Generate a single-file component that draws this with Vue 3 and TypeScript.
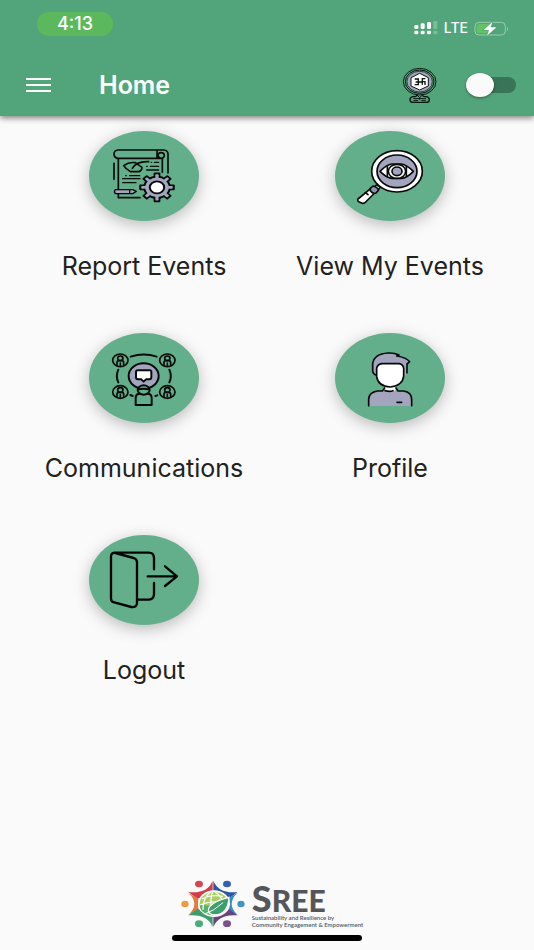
<script setup lang="ts">
import { ref } from 'vue'

type TileId = 'report' | 'view' | 'communications' | 'profile' | 'logout'

interface Tile {
  id: TileId
  label: string
}

const tiles: Tile[] = [
  { id: 'report', label: 'Report Events' },
  { id: 'view', label: 'View My Events' },
  { id: 'communications', label: 'Communications' },
  { id: 'profile', label: 'Profile' },
  { id: 'logout', label: 'Logout' },
]

const members = [
  { x: 121, y: 115 },
  { x: 262, y: 115 },
  { x: 121, y: 210 },
  { x: 262, y: 210 },
]

const teeth = [0, 45, 90, 135, 180, 225, 270, 315]

const enabled = ref(false)
</script>

<template>
  <div class="screen">
    <header class="top">
      <div class="status">
        <span class="clock">4:13</span>
        <div class="signals">
          <svg class="bars" viewBox="101 65 72 42" aria-hidden="true">
            <g fill="#fff">
              <rect x="102" y="94" width="12" height="11" rx="4" />
              <rect x="121" y="94" width="12" height="11" rx="4" />
              <rect x="140" y="94" width="12" height="11" rx="4" />
              <rect x="102" y="77" width="12" height="12" rx="4" />
              <rect x="121" y="72" width="12" height="17" rx="4" />
              <rect x="140" y="68" width="12" height="21" rx="4" />
            </g>
            <g fill="#fff" opacity=".25">
              <rect x="159" y="94" width="12" height="11" rx="3" />
              <rect x="159" y="65" width="12" height="24" rx="3" />
            </g>
          </svg>
          <span class="network">LTE</span>
          <svg class="battery" viewBox="282 61 108 45" aria-hidden="true">
            <rect x="285" y="65" width="91" height="38" rx="12" fill="none" stroke="#9accb2" stroke-width="3" />
            <path d="M381 78q6 6 0 13z" fill="#9accb2" />
            <path d="M298 70h29v28h-29q-8 0-8-8V78q0-8 8-8z" fill="#62c462" />
            <path d="M337 64 311 88h16l-6 17 28-25h-17z" fill="#fff" stroke="#52a57a" stroke-width="4" paint-order="stroke" />
          </svg>
        </div>
      </div>
      <div class="appbar">
        <button class="menu" type="button" aria-label="Open menu">
          <span></span><span></span><span></span>
        </button>
        <h1>Home</h1>
        <svg class="badge" viewBox="67 198 108 111" aria-hidden="true">
          <g fill="none" stroke="#0a1510" stroke-width="3">
            <ellipse cx="120" cy="242" rx="49" ry="40" />
            <ellipse cx="120" cy="242" rx="43" ry="35" />
            <ellipse cx="120" cy="242" rx="38" ry="31" fill="#a2a5bd" stroke-width="2" />
            <path d="m120 217 26 13v25l-26 12-26-12v-25z" fill="#fff" />
            <path d="M105 234h11v17h-11m3-8h19m10-10h-9v18m0-9h8v10" stroke-width="4" />
            <path d="M110 281q2 6-6 6h-4q-9 2-9 9 0 8 9 8h40q9 0 9-8 0-7-9-9h-5q-7 0-5-6" stroke-width="4" />
            <path d="m112 282 8 8 8-8M101 293h38M101 299h14m10 0h14M120 290v6" />
          </g>
        </svg>
        <label class="switch">
          <input v-model="enabled" type="checkbox" aria-label="Toggle" />
          <span class="track"></span>
          <span class="knob"></span>
        </label>
      </div>
    </header>

    <main class="tiles">
      <button v-for="tile in tiles" :key="tile.id" class="tile" type="button">
        <span class="disc">
          <svg v-if="tile.id === 'report'" viewBox="27 33 330 270" aria-hidden="true">
            <g fill="none" stroke="#060b09" stroke-width="5" stroke-linecap="round" stroke-linejoin="round">
              <path d="M239 115H112q-10-2-10-12 0-12 12-13h137q13 1 13 13v56M231 90v24M244 115q9-1 9-9t-10-8-8 10q2 7 9 7M247 116v41M115 116v92M115 222v11h65" />
              <path d="M102 130v48" />
              <path d="M131 137q16-12 35-9l20 14q-1 12-12 13h-22q-15-8-21-18zM157 145q13-22 49-20" />
              <path d="M214 127h1m8 0h13M200 139h2m9 0h25M200 150h36M128 176h52M137 167h2m10 0h30M128 188h40" stroke-width="4" />
              <path d="M106 209h52l11 5-11 7h-52q-5-6 0-12z" fill="#a2a5bd" stroke-width="4" />
              <path d="M149 209v11" stroke-width="4" />
            </g>
            <g transform="translate(231 202) scale(1.2 1)">
              <g fill="#a2a5bd" stroke="#060b09" stroke-width="5" stroke-linejoin="round">
                <rect v-for="angle in teeth" :key="angle" x="-6" y="-42" width="12" height="20" :transform="`rotate(${angle})`" />
                <circle r="32" />
              </g>
              <g fill="#a2a5bd">
                <rect v-for="angle in teeth" :key="angle" x="-4" y="-37" width="8" height="15" :transform="`rotate(${angle})`" />
              </g>
              <circle r="18" fill="#fff" stroke="#060b09" stroke-width="5" />
            </g>
          </svg>

          <svg v-else-if="tile.id === 'view'" viewBox="30 33 330 270" aria-hidden="true">
            <g stroke="#060b09" stroke-width="5" stroke-linecap="round" stroke-linejoin="round">
              <path d="m154 195-16 16 11 8 18-18z" fill="#fff" />
              <path d="m134 208-35 29q-3 5 4 9l9 4q6 1 10-4l30-30z" fill="#fff" />
              <path d="m144 198-9 8q0 9 10 14l8-1 8-9q-4-9-17-12z" fill="#8f93b0" />
              <ellipse cx="216" cy="154" rx="76" ry="62" fill="#fff" />
              <ellipse cx="216" cy="154" rx="60" ry="49" fill="#a2a5bd" />
              <path d="M165 154q20-20 35-22h29q17 3 36 22-19 20-36 21h-29q-16-2-35-21z" fill="#fff" />
              <path d="M187 139v30m57-30v30" fill="none" />
              <ellipse cx="216" cy="154" rx="26" ry="21" fill="#fff" />
              <ellipse cx="216" cy="154" rx="15" ry="13" fill="#a2a5bd" />
              <path d="m121 218 8 6" />
            </g>
          </svg>

          <svg v-else-if="tile.id === 'communications'" viewBox="27 33 330 270" aria-hidden="true">
            <g fill="none" stroke="#060b09" stroke-width="6" stroke-linecap="round" stroke-linejoin="round">
              <path d="M152 104q40-13 78 0M115 143q-9 20 0 38M268 143q9 20 0 38M151 219l7 3m68 0 6-2" />
              <ellipse cx="191" cy="162" rx="45" ry="38" fill="#a2a5bd" />
              <path d="M173 145h36q5 0 5 5v16q0 6-6 6h-10l-7 7-7-7h-10q-6 0-6-6v-16q0-5 5-5z" fill="#fff" />
              <g v-for="member in members" :key="`${member.x}-${member.y}`" :transform="`translate(${member.x} ${member.y})`" stroke-width="5">
                <ellipse rx="23" ry="19" />
                <ellipse cy="-6" rx="8" ry="7" />
                <path d="M-10 15V7q0-6 6-6h8q6 0 6 6v8M0 8v7" />
              </g>
              <path d="M167 249v-21q0-13 13-13h22q13 0 13 13v21z" fill="#64af8b" />
              <ellipse cx="191" cy="204" rx="18" ry="14" fill="#64af8b" />
              <path d="M175 202q16-4 32 0" />
            </g>
          </svg>

          <svg v-else-if="tile.id === 'profile'" viewBox="30 33 330 270" aria-hidden="true">
            <path d="M131 252v-20q0-21 27-25h18l6-12h28l6 12h20q24 5 24 25v20z" fill="#a2a5bd" />
            <path d="M180 190h32v14q-17 11-35 1z" fill="#fff" />
            <g stroke="#060b09" stroke-width="5" stroke-linecap="round" stroke-linejoin="round">
              <path d="M131 251v-19q0-21 27-25h14l7-9M260 251v-19q0-21-24-25h-17l-6-9M180 206q15 4 24 0M216 241h14" fill="none" />
              <path d="M154 159q-12-2-11-17v-17q4-29 46-32 24-1 34 8 23 4 33 17l-8 7v29q0 4-9 8z" fill="#a2a5bd" stroke="none" />
              <path d="M152 159q-10-4-9-17v-17q4-29 46-32 20-1 33 6l-7 3q29 4 39 17l-8 7v27" fill="none" />
              <path d="M171 125h52q12 3 13 14v23q-3 29-40 33-37-2-41-31v-25q2-12 16-14z" fill="#fff" />
            </g>
          </svg>

          <svg v-else viewBox="27 33 330 270" aria-hidden="true">
            <g fill="none" stroke="#020504" stroke-width="7" stroke-linecap="round" stroke-linejoin="round">
              <path d="M222 136v-35q-1-15-15-15H103q-10 1-10 11v127q0 9 10 11l51 14q17 2 17-13V115q0-10-10-13L106 87M174 227h33q14-1 15-15v-35" />
              <path d="M203 157h88m-36-30 36 30-36 29" />
            </g>
          </svg>
        </span>
        <span class="label">{{ tile.label }}</span>
      </button>
    </main>

    <footer class="foot">
      <div class="brand">
        <svg class="emblem" viewBox="48 30 192 144" aria-hidden="true">
          <ellipse cx="102" cy="42" rx="12" ry="10" fill="#d64550" />
          <ellipse cx="186" cy="42" rx="12" ry="10" fill="#3560b0" />
          <ellipse cx="60" cy="102" rx="11" ry="10" fill="#ee9a45" />
          <ellipse cx="228" cy="102" rx="11" ry="10" fill="#4492c8" />
          <ellipse cx="102" cy="161" rx="12" ry="10" fill="#4bac78" />
          <ellipse cx="186" cy="161" rx="12" ry="10" fill="#78528f" />
          <path d="M70 66q58 6 73-34v38l-46 16z" fill="#d33b49" />
          <path d="M145 32q16 40 73 34l-27 20-46-16z" fill="#2857a5" />
          <path d="M70 68q36 33 0 67l30-18V86z" fill="#e9783e" />
          <path d="M218 68q-36 33 0 67l-30-18V86z" fill="#388ac3" />
          <path d="M70 136q58-5 73 35v-39l-46-16z" fill="#3d9e6c" />
          <path d="M145 171q16-40 73-35l-27-20-46 16z" fill="#68447f" />
          <ellipse cx="147" cy="101" rx="48" ry="40" fill="#fff" />
          <ellipse cx="147" cy="101" rx="43" ry="35" fill="#a8d05b" />
          <path d="M104 103q0 31 43 33 15 0 27-8l-36-20z" fill="#58af6d" />
          <g fill="none" stroke="#fafafa" stroke-width="4">
            <path d="M111 87q27-15 62-8M104 105q30-12 58-9M137 65q-24 19-23 54M143 65q-8 18-4 49M150 66q18 10 21 27" />
          </g>
          <path d="M192 82q-3 52-42 53-20-1-20-14 2-24 62-39z" fill="#3d9f6c" stroke="#fff" stroke-width="4" />
          <path d="M119 132q26-8 55-34" fill="none" stroke="#fff" stroke-width="3" />
        </svg>
        <div class="wordmark">
          <strong><span>S</span>REE</strong>
          <small>Sustainability and Resilience by<br />Community Engagement &amp; Empowerment</small>
        </div>
      </div>
      <div class="home-bar"></div>
    </footer>
  </div>
</template>

<style>
body {
  margin: 0;
  background: #fafafa;
}
</style>

<style scoped>
.screen {
  display: flex;
  flex-direction: column;
  min-height: 100vh;
  box-sizing: border-box;
  font-family: Inter, "Liberation Sans", sans-serif;
  color: #212121;
  background: #fafafa;
}
button {
  padding: 0;
  border: 0;
  background: none;
  font: inherit;
  color: inherit;
  cursor: pointer;
}
svg {
  display: block;
}
.top {
  color: #fff;
  background: #52a57a;
  box-shadow: 0 2px 6px rgba(0, 0, 0, 0.5);
}
.status {
  display: flex;
  align-items: flex-start;
  justify-content: space-between;
  height: 42px;
  padding: 12px 24px 0 37px;
}
.clock {
  width: 76px;
  border-radius: 12px;
  background: #5cb85c;
  font-size: 18px;
  font-weight: 500;
  line-height: 24px;
  text-align: center;
}
.signals {
  display: flex;
  align-items: center;
  gap: 6px;
  padding-top: 8px;
}
.bars {
  width: 24px;
  height: 14px;
}
.network {
  font-size: 14px;
  font-weight: 500;
  line-height: 16px;
}
.battery {
  width: 36px;
  height: 15px;
}
.appbar {
  display: flex;
  align-items: center;
  height: 62px;
  padding: 0 18px 0 26px;
}
.menu {
  display: grid;
  gap: 4px;
  width: 25px;
}
.menu span {
  height: 2px;
  background: #fff;
}
h1 {
  flex: 1;
  margin: 0 0 0 48px;
  font-size: 25px;
  font-weight: 600;
  line-height: 32px;
}
.badge {
  width: 36px;
  height: 37px;
  margin-right: 28px;
}
.switch {
  display: grid;
  align-items: center;
  width: 50px;
}
.switch > * {
  grid-area: 1 / 1;
}
.switch input {
  width: 50px;
  height: 24px;
  margin: 0;
  opacity: 0;
}
.track {
  height: 16px;
  margin-left: 8px;
  border-radius: 8px;
  background: #397457;
}
.knob {
  width: 28px;
  height: 24px;
  border-radius: 50%;
  background: #fafafa;
  box-shadow: 0 1px 3px rgba(0, 0, 0, 0.4);
  pointer-events: none;
}
.switch input:checked ~ .knob {
  justify-self: end;
}
.tiles {
  display: grid;
  grid-template-columns: 1fr 1fr;
  grid-auto-rows: 202px;
  padding: 15px 21px 0;
}
.tile {
  display: flex;
  flex-direction: column;
  align-items: center;
  gap: 29px;
}
.disc {
  width: 110px;
  height: 90px;
  border-radius: 50%;
  background: #64af8b;
  box-shadow: 0 4px 16px rgba(0, 0, 0, 0.26);
}
.disc svg {
  width: 110px;
  height: 90px;
}
.label {
  font-size: 25px;
  line-height: 32px;
  white-space: nowrap;
}
.foot {
  display: flex;
  flex-direction: column;
  align-items: center;
  gap: 7px;
  margin-top: auto;
  padding-bottom: 9px;
}
.brand {
  display: flex;
  align-items: center;
  gap: 7px;
  padding-left: 10px;
}
.emblem {
  width: 64px;
  height: 48px;
}
.wordmark {
  padding-top: 4px;
  font-family: Lato, sans-serif;
  color: #55565a;
}
.wordmark strong {
  display: block;
  font-size: 30px;
  font-weight: 900;
  line-height: 28px;
}
.wordmark span {
  font-size: 36px;
}
.wordmark small {
  display: block;
  font-size: 6px;
  font-weight: 600;
  line-height: 7px;
  white-space: nowrap;
}
.home-bar {
  width: 190px;
  height: 6px;
  border-radius: 3px;
  background: #000;
}
</style>
